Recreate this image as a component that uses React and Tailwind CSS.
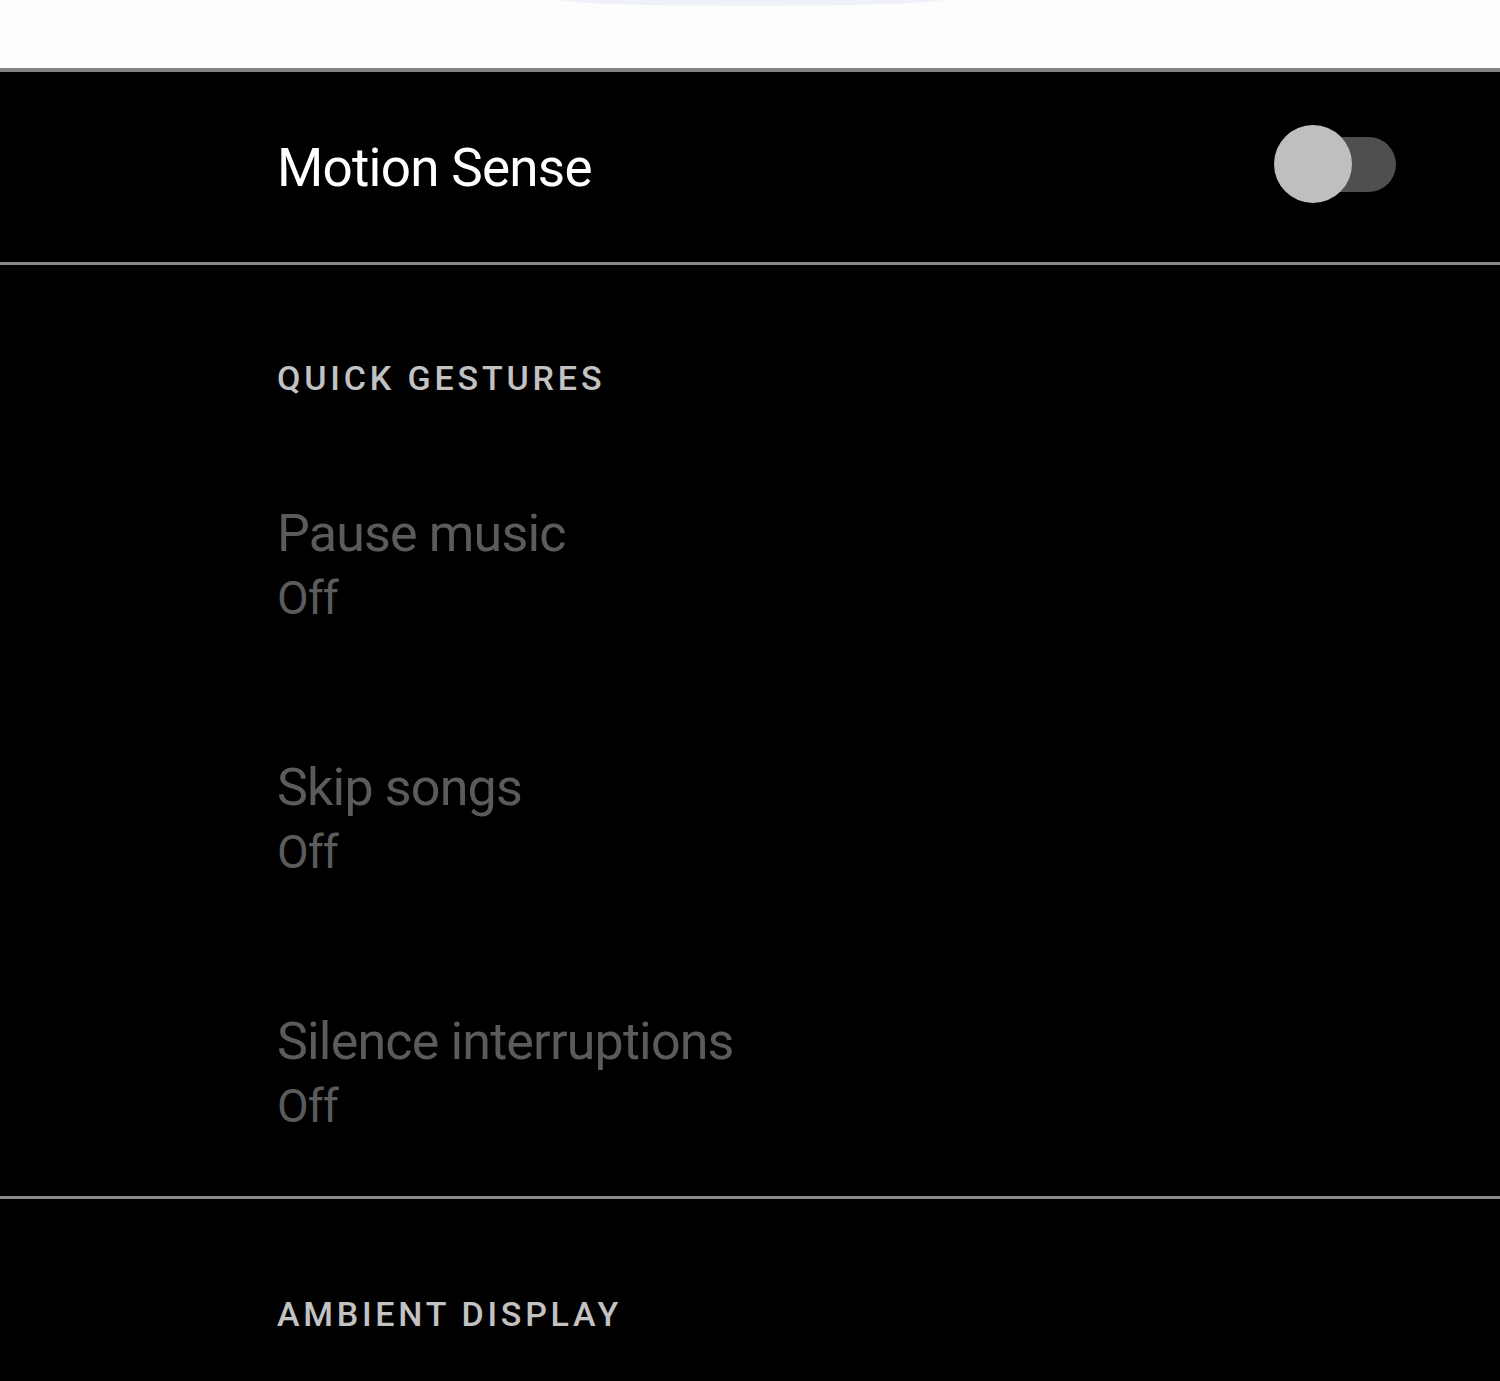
function Toggle() {
  return (
    <div className="relative w-[122px] h-[78px] mb-[6px] flex items-center">
      <div className="ml-[10px] w-[112px] h-[55px] rounded-full bg-[#4f4f4f]" />
      <div className="absolute left-0 top-0 w-[78px] h-[78px] rounded-full bg-[#bfbfbf]" />
    </div>
  )
}

function GestureItem({ title, first }) {
  return (
    <div className={first ? 'mt-[113px]' : 'mt-[140px]'}>
      <div className="text-[52px] leading-[52px] tracking-[-0.016em] text-[#5b5b5b]">{title}</div>
      <div className="mt-[14px] text-[46px] leading-[48px] tracking-[-0.02em] text-[#5b5b5b]">Off</div>
    </div>
  )
}

function App() {
  const gestures = ['Pause music', 'Skip songs', 'Silence interruptions']

  return (
    <div className="min-h-[1381px] bg-black font-['Roboto','Liberation_Sans',sans-serif] overflow-hidden">
      {/* top white strip with the edge of the illustration */}
      <div className="h-[68px] bg-[#fdfdfd] flex justify-center">
        <div className="w-[390px] h-[14px] -mt-[8px] rounded-[50%] bg-[#eef1f8]" />
      </div>
      <div className="h-[4px] bg-[#838383]" />

      <div className="h-[190px] flex items-center justify-between pl-[277px] pr-[104px]">
        <div className="mt-[3px] text-[53px] leading-[53px] tracking-[-0.014em] text-white">Motion Sense</div>
        <Toggle />
      </div>
      <div className="h-[3px] bg-[#8a8a8a]" />

      <section className="pl-[277px] pt-[96px] pb-[66px]">
        <h2 className="text-[34px] leading-[34px] font-medium tracking-[0.113em] text-[#c2c2c2]">QUICK GESTURES</h2>
        {gestures.map((g, i) => (
          <GestureItem key={g} title={g} first={i === 0} />
        ))}
      </section>
      <div className="h-[3px] bg-[#8a8a8a]" />

      <section className="pl-[277px] pt-[98px]">
        <h2 className="text-[34px] leading-[34px] font-medium tracking-[0.11em] text-[#c2c2c2]">AMBIENT DISPLAY</h2>
      </section>
    </div>
  )
}

export default App
